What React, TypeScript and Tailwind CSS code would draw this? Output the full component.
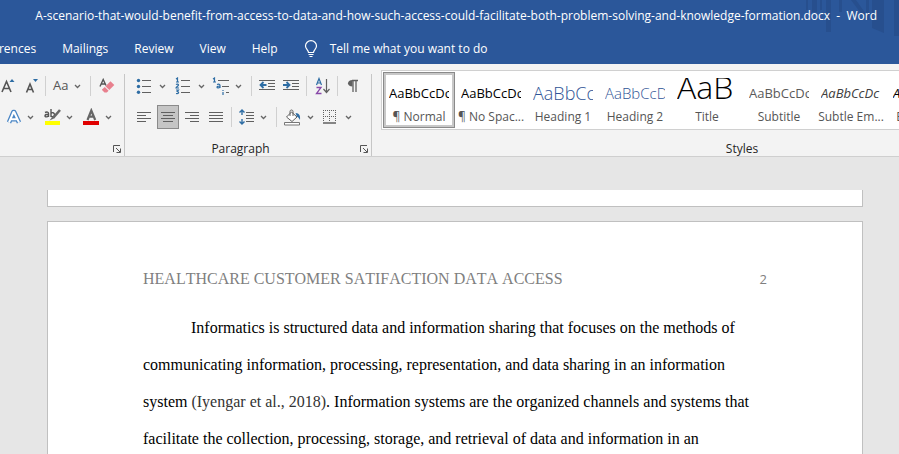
import { ReactNode } from 'react';

interface ToolProps {
  label: string;
  className: string;
  menu?: boolean;
  pressed?: boolean;
  children: ReactNode;
}

const TABS = ['References', 'Mailings', 'Review', 'View', 'Help'];

const STYLES = [
  { name: '¶ Normal',      sample: 'AaBbCcDc', look: 'text-[13px] leading-[30px] text-black' },
  { name: '¶ No Spac...',  sample: 'AaBbCcDc', look: 'text-[13px] leading-[30px] text-black' },
  { name: 'Heading 1',     sample: 'AaBbCc',   look: 'text-[18px] leading-[30px] font-light text-[#2f5496]' },
  { name: 'Heading 2',     sample: 'AaBbCcD',  look: 'text-[15px] leading-[30px] font-light text-[#2f5496]' },
  { name: 'Title',         sample: 'AaB',      look: 'text-[32px] leading-[42px] font-light text-black' },
  { name: 'Subtitle',      sample: 'AaBbCcDc', look: 'text-[13px] leading-[30px] text-[#5a5a5a]' },
  { name: 'Subtle Em...',  sample: 'AaBbCcDc', look: 'text-[13px] leading-[30px] italic text-[#404040]' },
  { name: 'Emphasis',      sample: 'AaBbCcDc', look: 'text-[13px] leading-[30px] italic text-black' },
];

function Chevron() {
  return (
    <svg width="7" height="5" viewBox="0 0 7 5" fill="none" stroke="#666" strokeWidth="1.3" className="shrink-0">
      <path d="M1 1l2.5 2.5L6 1" />
    </svg>
  );
}

function Tool({ label, className, menu, pressed, children }: ToolProps) {
  return (
    <button
      type="button"
      aria-label={label}
      aria-pressed={pressed}
      className={`flex h-6 shrink-0 items-center ${menu ? 'justify-between' : 'justify-center'} ${className}`}
    >
      {children}
      {menu && <Chevron />}
    </button>
  );
}

function Divider({ className }: { className: string }) {
  return <div className={`h-5 w-px shrink-0 bg-[#d0d0d0] ${className}`} />;
}

// One path of horizontal rules, used by every alignment icon
function Lines({ d }: { d: string }) {
  return (
    <svg width="16" height="16" viewBox="0 0 16 16" fill="none" stroke="#606060" className="shrink-0">
      <path d={d} />
    </svg>
  );
}

function Launcher({ label }: { label: string }) {
  return (
    <button type="button" aria-label={label} className="flex h-4 w-2 items-center">
      <svg width="8" height="8" viewBox="0 0 8 8" fill="none" stroke="#555">
        <path d="M.5 7V.5H7M3 3l4 4M7.5 3.5v4h-4" />
      </svg>
    </button>
  );
}

function FontGroup() {
  return (
    <section aria-label="Font" className="flex w-[125px] shrink-0 flex-col border-r border-[#c6c6c6]">
      <div className="flex h-6 items-center">
        <Tool label="Grow font" className="w-4">
          <svg width="16" height="16" viewBox="0 0 16 16" fill="none">
            <path d="M2 14L6.500 3.500 11 14M3.500 10.500h6" stroke="#555" strokeWidth="1.600" />
            <path d="M9.500 4L12 1l2.500 3z" fill="#2e6da4" />
          </svg>
        </Tool>
        <Tool label="Shrink font" className="ml-2 w-4">
          <svg width="16" height="16" viewBox="0 0 16 16" fill="none">
            <path d="M2.500 14.500L6 6l3.500 8.500M3.700 11.500h4.600" stroke="#555" strokeWidth="1.600" />
            <path d="M9 1h5l-2.500 3z" fill="#2e6da4" />
          </svg>
        </Tool>
        <Divider className="ml-[5px]" />
        <Tool label="Change case" menu className="ml-[7px] w-7">
          <span className="text-[13px] text-[#555]">Aa</span>
        </Tool>
        <Divider className="ml-[9px]" />
        <Tool label="Clear formatting" className="ml-2 w-4">
          <svg width="16" height="16" viewBox="0 0 16 16" fill="none">
            <path d="M1 8.500L4.200 1.500 7 7.500M2.300 6h3.500" stroke="#555" strokeWidth="1.400" />
            <path d="M11.500 3.200l3.800 3.800-5 5-3.800-3.800z" fill="#e8808e" />
            <path d="M5.800 8.900l3.800 3.800-1.800 1.800H5.500L3 12v-.5z" fill="#e8808e" />
          </svg>
        </Tool>
      </div>
      <div className="mt-[7px] flex h-6 items-center">
        <Tool label="Text effects" menu className="ml-[6px] w-7">
          <svg width="16" height="16" viewBox="0 0 16 16" fill="none" strokeLinejoin="round">
            <path d="M3 13.500L7.500 3h.6l4.900 10.500M4.800 10.300h6.400" stroke="#4a86c5" strokeWidth="4.600" />
            <path d="M3 13.500L7.500 3h.6l4.900 10.500M4.800 10.300h6.400" stroke="#fff" strokeWidth="2" />
          </svg>
        </Tool>
        <Tool label="Text highlight colour" menu className="ml-[10px] w-[29px]">
          <svg width="17" height="18" viewBox="0 0 17 18" fill="none">
            <path d="M1 4.500c2-1 3.500-.5 3.500 1v3.500M4.500 6.300C2.500 6.300 1 6.800 1 8s2.300 1.200 3.500-.3M7 1v8M7 5.500c1-1.500 3.500-1 3.500 1.200S8 9.300 7 8" stroke="#555" strokeWidth="1.400" />
            <path d="M16 2l-6.500 7.500" stroke="#666" strokeWidth="2.600" />
            <path d="M9 8l2 2-5.500 2.500z" fill="#666" />
            <path d="M1 13h15v4H1z" fill="#ff0" />
          </svg>
        </Tool>
        <Tool label="Font colour" menu className="ml-[10px] w-[29px]">
          <svg width="17" height="18" viewBox="0 0 17 18" fill="none">
            <path d="M4.500 12L8.300 2.500l3.900 9.500M5.800 8.700h5.200" stroke="#666" strokeWidth="2.200" />
            <path d="M0 13h16v4H0z" fill="#e00000" />
          </svg>
        </Tool>
      </div>
      <div className="mt-3 flex h-[15px] items-center justify-end pr-[3px]">
        <Launcher label="Font settings" />
      </div>
    </section>
  );
}

function ParagraphGroup() {
  return (
    <section aria-label="Paragraph" className="flex w-[247px] shrink-0 flex-col border-r border-[#c6c6c6]">
      <div className="flex h-6 items-center pl-[11px]">
        <Tool label="Bullets" menu className="w-[30px]">
          <svg width="16" height="16" viewBox="0 0 16 16" fill="none">
            <path d="M6 2.500h9M6 8.500h9M6 14.500h9" stroke="#606060" />
            <g fill="#2e6da4">
              <circle cx="2.500" cy="2.500" r="1.700" />
              <circle cx="2.500" cy="8.500" r="1.700" />
              <circle cx="2.500" cy="14.200" r="1.700" />
            </g>
          </svg>
        </Tool>
        <Tool label="Numbering" menu className="ml-[9px] w-[30px]">
          <svg width="16" height="18" viewBox="0 0 16 18" fill="none">
            <path d="M6 3.500h9M6 9.500h9M6 15.500h9" stroke="#606060" />
            <path d="M1 2l1.500-1v4M1 5h3M1 7.500c1-.8 2.500-.5 2.500.5S1 10 1 11h3M1 13h2.500L2.300 14.500c2 0 1.700 2.500-1.300 2" stroke="#2e6da4" strokeWidth="1.200" />
          </svg>
        </Tool>
        <Tool label="Multilevel list" menu className="ml-[7px] w-[30px]">
          <svg width="18" height="18" viewBox="0 0 18 18" fill="none">
            <path d="M6 3.500h11M10 9.500h7M14 15.500h3" stroke="#606060" />
            <path d="M1 2l1.500-1v4M1 5h3M5 7.500c2-.7 3 0 3 1V11M8 9c-2 0-3 .3-3 1.200s2 1 3 0M11 13v1M11 15v3" stroke="#2e6da4" strokeWidth="1.200" />
          </svg>
        </Tool>
        <Divider className="ml-[9px]" />
        <Tool label="Decrease indent" className="ml-[7px] w-4">
          <svg width="16" height="14" viewBox="0 0 16 14" fill="none">
            <path d="M0 1.500h16M9 4.500h7M9 7.500h7M0 10.500h16M0 12.500h0" stroke="#606060" />
            <path d="M7.500 6H2M4.500 3L1.500 6l3 3" stroke="#2e6da4" strokeWidth="1.800" />
          </svg>
        </Tool>
        <Tool label="Increase indent" className="ml-2 w-4">
          <svg width="16" height="14" viewBox="0 0 16 14" fill="none">
            <path d="M0 1.500h16M9 4.500h7M9 7.500h7M0 10.500h16" stroke="#606060" />
            <path d="M0 6h6M3.500 3l3 3-3 3" stroke="#2e6da4" strokeWidth="1.800" />
          </svg>
        </Tool>
        <Divider className="ml-[7px]" />
        <Tool label="Sort" className="ml-2 w-4">
          <svg width="16" height="18" viewBox="0 0 16 18" fill="none">
            <path d="M1.500 8L4 1.500 6.500 8M2.300 6h3.400" stroke="#2e6da4" strokeWidth="1.200" />
            <path d="M1.500 10.500h4.500l-4.500 6h5" stroke="#8848a8" strokeWidth="1.300" />
            <path d="M11.500 2v13M8.500 12l3 3.500 3-3.500" stroke="#606060" strokeWidth="1.200" />
          </svg>
        </Tool>
        <Divider className="ml-[6px]" />
        <Tool label="Show paragraph marks" className="ml-[7px] w-4">
          <svg width="12" height="14" viewBox="0 0 12 14" fill="none">
            <path d="M5.500 1C-.5 1-.5 7.500 5.500 7.500z" fill="#606060" />
            <path d="M5 1.500h6M6 1v12M9 1v12" stroke="#606060" strokeWidth="1.300" />
          </svg>
        </Tool>
      </div>
      <div className="mt-[7px] flex h-6 items-center pl-[11px]">
        <Tool label="Align left" className="w-4">
          <Lines d="M1 3.500h14M1 6.500h9M1 9.500h14M1 12.500h9" />
        </Tool>
        <Tool label="Centre" pressed className="ml-[5px] w-[22px] border border-[#8a8a8a] bg-[#c5c5c5]">
          <Lines d="M1 3.500h14M3 6.500h10M1 9.500h14M3 12.500h10" />
        </Tool>
        <Tool label="Align right" className="ml-[5px] w-4">
          <Lines d="M1 3.500h14M6 6.500h9M1 9.500h14M6 12.500h9" />
        </Tool>
        <Tool label="Justify" className="ml-2 w-4">
          <Lines d="M1 3.500h14M1 6.500h14M1 9.500h14M1 12.500h14" />
        </Tool>
        <Divider className="ml-[7px]" />
        <Tool label="Line spacing" menu className="ml-[7px] w-7">
          <svg width="16" height="18" viewBox="0 0 16 18" fill="none">
            <path d="M7 4.500h8M7 7.500h8M7 10.500h8M7 13.500h8" stroke="#606060" />
            <path d="M3 2v5M.5 4.500L3 2l2.500 2.500M3 11v5M.5 13.500L3 16l2.500-2.500" stroke="#2e6da4" strokeWidth="1.400" />
          </svg>
        </Tool>
        <Divider className="ml-[9px]" />
        <Tool label="Shading" menu className="ml-[7px] w-[30px]">
          <svg width="17" height="17" viewBox="0 0 17 17" fill="none">
            <path d="M7.500 3l5.500 5-5 4.500L2.500 8z" fill="#fff" stroke="#606060" />
            <path d="M6 7V2.500C6 .5 9 .5 9 2.500V7" stroke="#606060" />
            <path d="M11.500 4c4 0 5 3 4.500 7-1-2-2-3-3-3.200z" fill="#2e6da4" />
            <path d="M.5 13.500h15v2.500H.5z" fill="#fff" stroke="#777" />
          </svg>
        </Tool>
        <Tool label="Borders" menu className="ml-[8px] w-[30px]">
          <svg width="16" height="16" viewBox="0 0 16 16" fill="none" stroke="#606060">
            <path d="M1 1.500h14M1 7.500h14M1.500 1v12M7.500 1v12M13.500 1v12" strokeDasharray="1 1" />
            <path d="M1 14h13" strokeWidth="1.500" />
          </svg>
        </Tool>
      </div>
      <div className="mt-3 flex h-[15px] items-center pr-[3px]">
        <span className="flex-1 pr-1 text-center">Paragraph</span>
        <Launcher label="Paragraph settings" />
      </div>
    </section>
  );
}

function StylesGroup() {
  return (
    <section aria-label="Styles" className="flex w-[731px] shrink-0 flex-col pl-[9px]">
      <div className="-mt-1 flex h-[60px] border border-[#d0d0d0] bg-white p-px">
        {STYLES.map(({ name, sample, look }, i) => (
          <button
            key={name}
            type="button"
            className={`flex w-[72px] shrink-0 flex-col px-[3px] ${
              i === 0 ? 'outline-1 -outline-offset-1 outline-[#8a8a8a] ring-3 ring-inset ring-[#c8c8c8]' : ''
            }`}
          >
            <span className="flex h-[37px] w-full px-[3px] pt-[6px] pb-px">
              <span className="flex h-[30px] w-full items-end overflow-hidden">
                <span className={`whitespace-nowrap ${look}`}>{sample}</span>
              </span>
            </span>
            <span className="w-full text-center leading-4 whitespace-nowrap text-[#555]">{name}</span>
          </button>
        ))}
      </div>
      <div className="mt-[11px] h-[15px] text-center leading-4">Styles</div>
    </section>
  );
}

export default function App() {
  return (
    <div className="flex h-screen flex-col overflow-hidden bg-[#e6e6e6] font-['Open_Sans','Noto_Sans',sans-serif] text-[12px] text-[#262626]">

      {/* Title bar and tabs */}
      <header className="relative shrink-0 bg-[#2b579a] text-white">
        <svg width="95" height="36" viewBox="0 0 95 36" fill="#274f8e" className="absolute top-0 right-0">
          <path d="M2 0h2v10H2zM8 0h5v12H8zM16 0h2v10h-2zM22 0h5v32h-5zM35 0h3v12h-3zM47 0h5l10 14V0h3v20h-3zM68 0h12v33l-12-5zM90 0h5v36h-5z" />
        </svg>
        <div className="relative flex h-8 items-center justify-end pr-[22px] whitespace-pre">
          A-scenario-that-would-benefit-from-access-to-data-and-how-such-access-could-facilitate-both-problem-solving-and-knowledge-formation.docx  -  Word
        </div>
        <nav className="relative -ml-[26px] flex h-8 items-center gap-[26px] pt-[2px]">
          {TABS.map((tab) => (
            <button key={tab} type="button" className="h-7">{tab}</button>
          ))}
          <button type="button" className="flex h-7 items-center gap-3">
            <svg width="14" height="18" viewBox="0 0 14 18" fill="none" stroke="#fff" strokeWidth="1.200">
              <path d="M4.500 12.500c0-2.500-3-3.500-3-6.500a5.500 5.300 0 0 1 11 0c0 3-3 4-3 6.500zM4.500 14.500h5M5.500 16.500h3" />
            </svg>
            Tell me what you want to do
          </button>
        </nav>
      </header>

      {/* Ribbon */}
      <div className="flex shrink-0 overflow-hidden border-b border-[#cfcfcf] bg-[#f3f3f3] pt-[10px]">
        <FontGroup />
        <ParagraphGroup />
        <StylesGroup />
      </div>

      {/* Document */}
      <main className="flex min-h-0 flex-1 flex-col overflow-hidden pt-[33px] pr-9 pl-[47px]">
        <div className="h-[17px] shrink-0 border border-t-0 border-[#c0c0c0] bg-white" />
        <article className="mt-[14px] flex-1 border border-b-0 border-[#c0c0c0] bg-white px-[95px] pt-[47px] font-['Liberation_Serif',serif] text-[16px] [font-kerning:none]">
          <div className="flex items-center justify-between leading-5 text-[#7f7f7f]">
            <span>HEALTHCARE CUSTOMER SATIFACTION DATA ACCESS</span>
            <span className="font-['Open_Sans',sans-serif] text-[13px]">2</span>
          </div>
          <p className="mt-5 indent-12 leading-[37px] text-black">
            Informatics is structured data and information sharing that focuses on the methods of
            communicating information, processing, representation, and data sharing in an information
            system <span className="text-[#333]">(Iyengar et al., 2018)</span>. Information systems are the organized channels and systems that
            facilitate the collection, processing, storage, and retrieval of data and information in an
          </p>
        </article>
      </main>
    </div>
  );
}
